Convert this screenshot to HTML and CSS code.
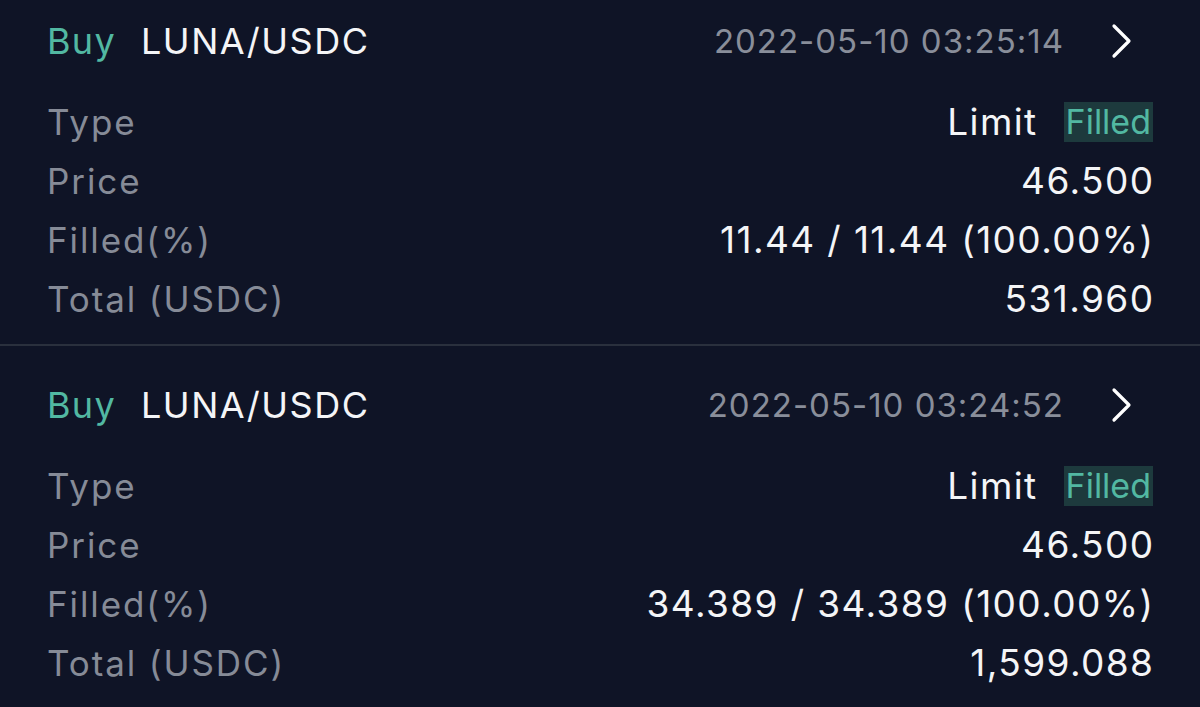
FILE: index.html
```html
<!DOCTYPE html>
<html lang="en">
<head>
  <meta charset="UTF-8">
  <meta name="viewport" content="width=device-width, initial-scale=1.0">
  <title>Orders</title>
  <link rel="stylesheet" href="styles.css">
</head>
<body>
  <ul class="orders">
    <li class="order">
      <div class="order-head">
        <span class="side">Buy</span>
        <span class="pair">LUNA/USDC</span>
        <span class="time">2022-05-10 03:25:14</span>
        <svg class="arrow" width="22" height="36" viewBox="0 0 22 36"><polyline points="3,3 18,18 3,33" fill="none" stroke="#fff" stroke-width="3.2" stroke-linecap="round" stroke-linejoin="round"/></svg>
      </div>
      <div class="row"><span class="label">Type</span><span class="value">Limit <em class="status">Filled</em></span></div>
      <div class="row"><span class="label">Price</span><span class="value">46.500</span></div>
      <div class="row"><span class="label">Filled(%)</span><span class="value">11.44 / 11.44 (100.00%)</span></div>
      <div class="row"><span class="label">Total (USDC)</span><span class="value">531.960</span></div>
    </li>
    <li class="order">
      <div class="order-head">
        <span class="side">Buy</span>
        <span class="pair">LUNA/USDC</span>
        <span class="time">2022-05-10 03:24:52</span>
        <svg class="arrow" width="22" height="36" viewBox="0 0 22 36"><polyline points="3,3 18,18 3,33" fill="none" stroke="#fff" stroke-width="3.2" stroke-linecap="round" stroke-linejoin="round"/></svg>
      </div>
      <div class="row"><span class="label">Type</span><span class="value">Limit <em class="status">Filled</em></span></div>
      <div class="row"><span class="label">Price</span><span class="value">46.500</span></div>
      <div class="row"><span class="label">Filled(%)</span><span class="value">34.389 / 34.389 (100.00%)</span></div>
      <div class="row"><span class="label">Total (USDC)</span><span class="value">1,599.088</span></div>
    </li>
  </ul>
</body>
</html>
```

FILE: styles.css
```css
html,body{margin: 0;padding: 0;background: #0f1426;}
body{font-family: Inter, "Liberation Sans", sans-serif;color: #f4f5f7;overflow: hidden;}

ul,li{list-style: none;margin: 0;padding: 0}

.order{padding: 18px 47px 16px;border-bottom: 2px solid #2a303d;}
.order:first-child{padding-top: 0;}

.order-head{display: flex;align-items: center;height: 82px;margin-bottom: 10px;}
.side{color: #52b8a2;font-size: 36px;letter-spacing: 1.3px;}
.pair{font-size: 36px;margin-left: 25px;letter-spacing: 1.5px;}
.time{margin-left: auto;color: #898e9a;font-size: 33px;letter-spacing: 1px;}
.arrow{margin-left: 47px;margin-right: 20px;}

.row{display: flex;justify-content: space-between;align-items: center;height: 59px;}
.label{color: #868b97;font-size: 35px;letter-spacing: 1.9px;}
/* 右对齐时去掉末尾字距 */
.value{font-size: 37px;letter-spacing: 1.4px;margin-right: -1.4px;display: flex;align-items: center;}
.status{font-style: normal;color: #52b8a2;background: #1d3a3d;margin-left: 26px;margin-right: 1.4px;padding: 0 2px;height: 40px;line-height: 40px;font-size: 34px;letter-spacing: 0;}
```
